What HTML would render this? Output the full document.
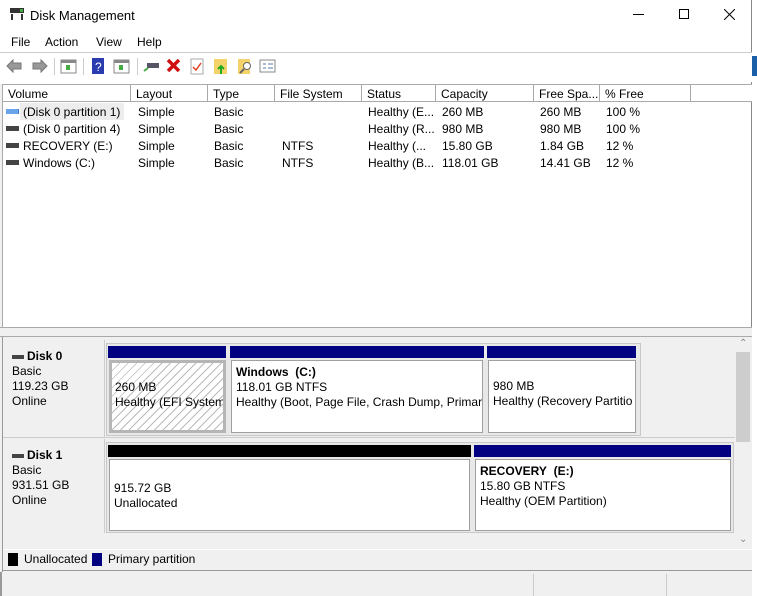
<!DOCTYPE html>
<html><head><meta charset="utf-8"><style>
*{box-sizing:border-box;margin:0;padding:0}
body{width:757px;height:596px;overflow:hidden;background:#fff;font-family:"Liberation Sans",sans-serif;font-size:12px;color:#000;position:relative}
.a{position:absolute}
.win{left:0;top:0;width:752px;height:596px;border-right:1px solid #888;background:#fff}
.t{white-space:nowrap}
.hdr{top:84px;left:3px;width:749px;height:18px;border-top:1px solid #aaa;border-bottom:1px solid #aaa;background:#fff}
.hc{position:absolute;top:0;height:17px;border-right:1px solid #aaa;padding-left:5px;line-height:18px}
.row{position:absolute;left:3px;height:17px;line-height:17px}
.bar{position:absolute;height:12px;background:#000080}
.body{position:absolute;background:#fff;border:1px solid #a0a0a0;padding:4px 4px;line-height:15px;overflow:hidden;white-space:nowrap}
.outer{position:absolute;background:#e8e8e8;border:1px solid #c8c8c8}
.dl{position:absolute;left:3px;width:102px;background:#f0f0f0;border-right:1px solid #ccc;padding:9px 9px 0;line-height:15px}
</style></head><body>
<div class="a win"></div>
<div class="a" style="left:752px;top:0;width:5px;height:596px;background:#fff"></div>
<div class="a" style="left:752px;top:56px;width:5px;height:20px;background:#1a5fa8"></div>
<svg class="a" style="left:9px;top:7px" width="17" height="14"><rect x="1" y="1" width="14" height="5" fill="#333"/><rect x="11" y="2" width="3" height="3" fill="#4a4"/><rect x="2" y="7" width="2" height="6" fill="#333"/><rect x="12" y="7" width="2" height="6" fill="#333"/></svg>
<div class="a t" style="left:30px;top:8px;font-size:13px">Disk Management</div>
<div class="a" style="left:633px;top:14px;width:11px;height:1px;background:#000"></div>
<div class="a" style="left:679px;top:9px;width:10px;height:10px;border:1px solid #000"></div>
<svg class="a" style="left:724px;top:9px" width="11" height="11"><path d="M0 0L11 11M11 0L0 11" stroke="#000"/></svg>
<div class="a t" style="left:11px;top:35px">File</div>
<div class="a t" style="left:45px;top:35px">Action</div>
<div class="a t" style="left:96px;top:35px">View</div>
<div class="a t" style="left:137px;top:35px">Help</div>
<div class="a" style="left:0;top:52px;width:752px;height:1px;background:#ccc"></div>
<div class="a" style="left:0;top:53px;width:752px;height:29px;background:#fff"></div>
<svg class="a" style="left:4px;top:57px" width="280" height="20">
<path d="M3 9L9 3V6H17V12H9V15Z" fill="#999" stroke="#777"/>
<path d="M43 9L37 3V6H29V12H37V15Z" fill="#999" stroke="#777"/>
<rect x="50" y="1" width="1" height="17" fill="#ccc"/>
<rect x="57" y="3" width="15" height="13" fill="#fff" stroke="#888"/><rect x="57" y="3" width="15" height="3" fill="#888"/><rect x="62" y="8" width="4" height="5" fill="#4a4"/>
<rect x="79" y="1" width="1" height="17" fill="#ccc"/>
<rect x="88" y="1" width="12" height="16" fill="#2a3cb0"/><text x="91" y="14" fill="#fff" font-size="12" font-family="Liberation Sans">?</text>
<rect x="110" y="3" width="15" height="13" fill="#fff" stroke="#888"/><rect x="110" y="3" width="15" height="3" fill="#888"/><rect x="115" y="8" width="4" height="5" fill="#4a4"/>
<rect x="133" y="1" width="1" height="17" fill="#ccc"/>
<rect x="143" y="6" width="12" height="5" fill="#556" /><path d="M140 14L144 11" stroke="#4a4" stroke-width="2"/>
<path d="M164 3L175 14M175 3L164 14" stroke="#d01010" stroke-width="3.5"/>
<rect x="187" y="2" width="12" height="15" fill="#fff" stroke="#aaa"/><path d="M189 10L192 13L197 6" stroke="#e04020" fill="none" stroke-width="1.5"/>
<rect x="210" y="2" width="13" height="15" fill="#f5d36b"/><path d="M217 17V10M214 12L217 9L220 12" stroke="#2a2" stroke-width="2" fill="none"/>
<rect x="234" y="2" width="12" height="15" fill="#f5d36b"/><circle cx="243" cy="9" r="3.5" fill="#fff" stroke="#666"/><path d="M240 12L236 16" stroke="#666" stroke-width="2"/>
<rect x="256" y="3" width="15" height="12" fill="#fff" stroke="#888"/><path d="M259 7H262M264 7H269M259 11H262M264 11H269" stroke="#57a"/>
</svg>
<div class="a hdr">
<div class="hc" style="left:0;width:128px">Volume</div>
<div class="hc" style="left:128px;width:77px">Layout</div>
<div class="hc" style="left:205px;width:67px">Type</div>
<div class="hc" style="left:272px;width:87px">File System</div>
<div class="hc" style="left:359px;width:74px">Status</div>
<div class="hc" style="left:433px;width:98px">Capacity</div>
<div class="hc" style="left:531px;width:66px">Free Spa...</div>
<div class="hc" style="left:597px;width:91px">% Free</div>
</div>
<div class="a" style="left:0;top:84px;width:3px;height:243px;background:#f0f0f0;border-right:1px solid #aaa"></div>
<div class="a" style="left:20px;top:103px;width:104px;height:17px;background:#ededed"></div>
<svg class="a" style="left:6px;top:107px" width="14" height="60">
<rect x="0" y="2" width="13" height="5" fill="#3a7bd5"/><path d="M1 2v5M3 2v5M5 2v5M7 2v5M9 2v5M11 2v5" stroke="#9cf"/>
<rect x="0" y="19" width="13" height="5" fill="#444"/><rect x="0" y="36" width="13" height="5" fill="#444"/><rect x="0" y="53" width="13" height="5" fill="#444"/>
</svg>
<div class="row t" style="top:104px;width:740px"><span class="a" style="left:20px">(Disk 0 partition 1)</span><span class="a" style="left:135px">Simple</span><span class="a" style="left:211px">Basic</span><span class="a" style="left:365px">Healthy (E...</span><span class="a" style="left:439px">260 MB</span><span class="a" style="left:537px">260 MB</span><span class="a" style="left:603px">100 %</span></div>
<div class="row t" style="top:121px;width:740px"><span class="a" style="left:20px">(Disk 0 partition 4)</span><span class="a" style="left:135px">Simple</span><span class="a" style="left:211px">Basic</span><span class="a" style="left:365px">Healthy (R...</span><span class="a" style="left:439px">980 MB</span><span class="a" style="left:537px">980 MB</span><span class="a" style="left:603px">100 %</span></div>
<div class="row t" style="top:138px;width:740px"><span class="a" style="left:20px">RECOVERY (E:)</span><span class="a" style="left:135px">Simple</span><span class="a" style="left:211px">Basic</span><span class="a" style="left:279px">NTFS</span><span class="a" style="left:365px">Healthy (...</span><span class="a" style="left:439px">15.80 GB</span><span class="a" style="left:537px">1.84 GB</span><span class="a" style="left:603px">12 %</span></div>
<div class="row t" style="top:155px;width:740px"><span class="a" style="left:20px">Windows (C:)</span><span class="a" style="left:135px">Simple</span><span class="a" style="left:211px">Basic</span><span class="a" style="left:279px">NTFS</span><span class="a" style="left:365px">Healthy (B...</span><span class="a" style="left:439px">118.01 GB</span><span class="a" style="left:537px">14.41 GB</span><span class="a" style="left:603px">12 %</span></div>
<div class="a" style="left:0;top:327px;width:752px;height:10px;background:#f0f0f0;border-top:1px solid #aaa;border-bottom:1px solid #aaa"></div>
<div class="a" style="left:0;top:337px;width:752px;height:235px;background:#f0f0f0"></div>
<div class="a" style="left:0;top:337px;width:3px;height:235px;background:#f0f0f0;border-right:1px solid #999"></div>
<div class="a" style="left:735px;top:337px;width:16px;height:212px;background:#f0f0f0"></div>
<div class="a" style="left:736px;top:352px;width:14px;height:90px;background:#cdcdcd"></div>
<div class="a t" style="left:739px;top:338px;font-size:10px;color:#888">&#8963;</div>
<div class="a t" style="left:739px;top:534px;font-size:10px;color:#888">&#8964;</div>
<div class="dl" style="top:340px;height:97px"><div style="font-weight:bold"><span style="display:inline-block;width:12px;height:4px;background:#444;vertical-align:middle;margin-right:3px"></span>Disk 0</div>Basic<br>119.23 GB<br>Online</div>
<div class="a" style="left:3px;top:437px;width:732px;height:1px;background:#ccc"></div>
<div class="outer" style="left:106px;top:343px;width:535px;height:93px"></div>
<div class="bar" style="left:108px;top:346px;width:118px"></div>
<div class="bar" style="left:230px;top:346px;width:254px"></div>
<div class="bar" style="left:487px;top:346px;width:149px"></div>
<div class="body" style="left:109px;top:360px;width:117px;height:73px;border:3px solid #b5b5b5;padding:17px 3px;background:repeating-linear-gradient(135deg,#fff 0 5px,#bbb 5px 6px)">260 MB<br>Healthy (EFI System</div>
<div class="body" style="left:231px;top:360px;width:252px;height:73px"><b>Windows&nbsp; (C:)</b><br>118.01 GB NTFS<br>Healthy (Boot, Page File, Crash Dump, Primar</div>
<div class="body" style="left:488px;top:360px;width:148px;height:73px;padding-top:18px">980 MB<br>Healthy (Recovery Partitio</div>
<div class="dl" style="top:439px;height:94px"><div style="font-weight:bold"><span style="display:inline-block;width:12px;height:4px;background:#444;vertical-align:middle;margin-right:3px"></span>Disk 1</div>Basic<br>931.51 GB<br>Online</div>
<div class="outer" style="left:106px;top:442px;width:628px;height:91px"></div>
<div class="bar" style="left:108px;top:445px;width:363px;background:#000"></div>
<div class="bar" style="left:474px;top:445px;width:257px"></div>
<div class="body" style="left:109px;top:459px;width:361px;height:72px;padding-top:21px">915.72 GB<br>Unallocated</div>
<div class="body" style="left:475px;top:459px;width:256px;height:72px"><b>RECOVERY&nbsp; (E:)</b><br>15.80 GB NTFS<br>Healthy (OEM Partition)</div>
<div class="a" style="left:3px;top:549px;width:749px;height:22px;border-top:1px solid #fff;border-bottom:1px solid #999;background:#f0f0f0"></div>
<div class="a" style="left:8px;top:553px;width:10px;height:13px;background:#000"></div>
<div class="a t" style="left:24px;top:552px">Unallocated</div>
<div class="a" style="left:92px;top:553px;width:10px;height:13px;background:#000080"></div>
<div class="a t" style="left:108px;top:552px">Primary partition</div>
<div class="a" style="left:0;top:572px;width:752px;height:24px;background:#f0f0f0;border-left:2px solid #999"></div>
<div class="a" style="left:533px;top:574px;width:1px;height:22px;background:#ccc"></div>
<div class="a" style="left:666px;top:574px;width:1px;height:22px;background:#ccc"></div>
</body></html>
